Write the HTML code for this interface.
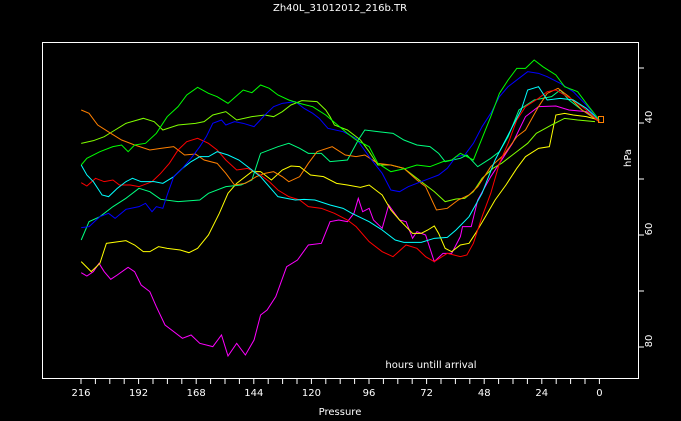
<!DOCTYPE html>
<html><head><style>
html,body{margin:0;padding:0;background:#000;width:681px;height:421px;overflow:hidden}
svg{display:block}
text{font-family:"DejaVu Sans","Liberation Sans",sans-serif;fill:#fff;font-size:10px}
</style></head><body>
<svg width="681" height="421" viewBox="0 0 681 421">
<rect width="681" height="421" fill="#000"/>
<text x="340" y="11" text-anchor="middle">Zh40L_31012012_216b.TR</text>
<rect x="42.5" y="42.5" width="596" height="336" fill="none" stroke="#fff" stroke-width="1"/>
<g stroke="#fff" stroke-width="1">
<path d="M638 68h6M638 123h6M638 179h6M638 235h6M638 291h6M638 347h6"/>
<path d="M81 378v6M95.4 378v6M109.8 378v6M124.2 378v6M138.6 378v6M153 378v6M167.4 378v6M181.8 378v6M196.2 378v6M210.6 378v6M225 378v6M239.4 378v6M253.8 378v6M268.2 378v6M282.6 378v6M297 378v6M311.4 378v6M325.8 378v6M340.2 378v6M354.6 378v6M369 378v6M383.4 378v6M397.8 378v6M412.2 378v6M426.6 378v6M441 378v6M455.4 378v6M469.8 378v6M484.2 378v6M498.6 378v6M513 378v6M527.4 378v6M541.8 378v6M556.2 378v6M570.6 378v6M585 378v6M599.4 378v6"/>
</g>
<g text-anchor="middle">
<text x="81" y="396">216</text><text x="138.6" y="396">192</text><text x="196.2" y="396">168</text><text x="253.8" y="396">144</text><text x="311.4" y="396">120</text><text x="369" y="396">96</text><text x="426.6" y="396">72</text><text x="484.2" y="396">48</text><text x="541.8" y="396">24</text><text x="599.4" y="396">0</text>
<text x="340" y="415">Pressure</text>
<text transform="translate(652,117) rotate(-90)">40</text>
<text transform="translate(652,229) rotate(-90)">60</text>
<text transform="translate(652,341) rotate(-90)">80</text>
<text transform="translate(631,158) rotate(-90)">hPa</text>
</g>
<text x="431" y="368" text-anchor="middle">hours untill arrival</text>
<g transform="scale(0.43429,0.33333)" fill="none" stroke-width="1" vector-effect="non-scaling-stroke">
<polyline vector-effect="non-scaling-stroke" stroke="#ff00ff" points="187,818 200,828 215,815 228,790 240,815 255,838 270,825 295,802 310,815 325,855 345,875 360,920 380,975 400,995 420,1015 440,1005 460,1030 490,1040 510,1005 525,1068 545,1030 565,1065 585,1020 600,945 615,930 635,890 660,800 685,780 710,735 740,730 760,665 780,660 800,665 815,640 825,595 835,635 850,625 860,660 880,685 895,615 920,660 935,665 950,715 960,695 980,705 1000,785 1020,760 1040,760 1060,710 1065,680 1085,680 1100,600 1130,530 1160,470 1180,430 1210,350 1240,320 1280,318 1310,330 1350,335 1380,365"/>
<polyline vector-effect="non-scaling-stroke" stroke="#ffff00" points="187,785 210,815 230,790 245,730 290,722 310,735 330,755 345,755 365,740 385,745 415,750 435,758 455,745 480,705 505,640 525,580 545,550 580,515 600,515 625,540 650,510 670,498 690,500 715,525 745,530 775,550 800,555 830,562 850,555 880,585 900,630 920,660 935,680 950,700 970,700 985,690 1000,678 1010,700 1025,745 1040,755 1060,735 1080,730 1095,700 1120,645 1140,600 1165,555 1190,505 1210,470 1240,445 1265,440 1280,345 1300,340 1320,345 1350,350 1380,360"/>
<polyline vector-effect="non-scaling-stroke" stroke="#80ff00" points="187,430 215,422 240,410 265,390 290,370 330,355 355,365 375,390 410,375 450,370 470,365 490,345 520,335 545,360 580,350 610,345 630,350 650,335 670,315 695,302 730,305 750,330 760,350 770,375 800,390 830,420 850,455 870,495 900,495 930,505 960,535 980,555 1000,575 1025,605 1050,597 1070,595 1090,575 1110,535 1135,505 1155,490 1190,455 1215,430 1235,400 1270,375 1300,355 1330,360 1370,365"/>
<polyline vector-effect="non-scaling-stroke" stroke="#00ff80" points="187,720 205,665 230,650 260,620 290,595 320,565 345,575 370,598 410,605 460,600 480,580 520,560 555,555 580,540 600,460 640,440 665,430 690,445 710,460 740,460 760,485 800,480 825,420 840,390 870,395 905,400 930,420 960,435 990,440 1010,460 1025,485 1060,475 1075,465 1100,500 1130,475 1150,455 1170,410 1195,330 1230,300 1270,290 1290,270 1310,300 1340,330 1380,360"/>
<polyline vector-effect="non-scaling-stroke" stroke="#ff8000" points="187,330 205,340 225,375 255,400 280,420 310,435 345,450 370,445 400,440 425,465 450,462 470,480 500,490 520,520 540,555 565,550 590,530 610,520 630,515 650,530 665,545 690,530 710,490 730,455 765,440 795,465 820,470 840,465 870,490 900,495 930,505 960,540 980,560 1005,630 1030,625 1055,600 1080,585 1100,560 1130,500 1160,465 1190,410 1210,390 1240,320 1260,280 1285,265 1310,290 1340,330 1380,365"/>
<polyline vector-effect="non-scaling-stroke" stroke="#ff0000" points="187,548 200,558 220,535 240,545 260,540 275,555 300,555 320,560 350,545 370,520 390,490 410,450 430,425 455,415 480,430 500,450 520,480 545,510 570,505 600,525 620,545 640,570 665,590 690,600 710,620 740,625 770,640 800,660 820,680 850,725 880,755 905,770 935,735 960,745 980,770 1000,785 1030,760 1060,770 1075,765 1090,730 1110,650 1130,580 1150,490 1170,430 1190,360 1210,320 1240,295 1260,275 1280,270 1300,285 1320,300 1350,330 1380,365"/>
<polyline vector-effect="non-scaling-stroke" stroke="#00ffff" points="187,495 200,525 215,545 235,585 250,590 270,565 290,545 305,535 325,545 355,545 375,550 400,530 420,505 440,485 460,470 480,470 500,455 525,465 550,480 570,500 600,530 620,560 640,590 660,595 680,600 700,598 725,600 760,615 790,625 810,640 850,665 880,690 910,720 930,727 970,727 1000,715 1030,712 1050,690 1080,650 1110,580 1140,480 1160,430 1180,380 1200,330 1215,270 1240,260 1260,300 1290,295 1320,300 1350,325 1380,360"/>
<polyline vector-effect="non-scaling-stroke" stroke="#0000ff" points="187,683 205,680 230,650 250,640 265,655 290,628 320,620 335,610 350,635 360,620 375,625 385,585 400,530 420,505 440,475 460,440 475,410 490,370 510,360 520,375 540,365 560,370 585,380 610,345 630,320 650,310 680,305 700,325 720,340 735,355 755,385 790,395 820,415 850,470 880,520 900,570 920,575 940,560 960,550 990,535 1010,525 1030,505 1050,470 1070,465 1090,430 1110,380 1130,340 1150,290 1170,260 1195,235 1215,215 1240,220 1260,230 1290,250 1320,275 1350,315 1380,360"/>
<polyline vector-effect="non-scaling-stroke" stroke="#00ff00" points="187,495 200,475 230,455 260,440 280,435 295,455 310,435 335,430 360,400 385,350 410,320 430,285 455,262 480,280 500,290 525,310 560,270 580,278 600,255 620,265 640,285 665,300 690,310 720,320 750,345 800,400 820,420 850,440 870,490 900,515 935,505 960,495 990,500 1020,485 1040,480 1060,460 1090,480 1110,415 1130,350 1150,280 1170,240 1190,205 1210,205 1230,180 1250,200 1280,225 1300,260 1330,275 1350,310 1380,360"/>
</g>
<rect x="598.5" y="116.5" width="5" height="6" fill="none" stroke="#ff8000"/>
</svg>
</body></html>
